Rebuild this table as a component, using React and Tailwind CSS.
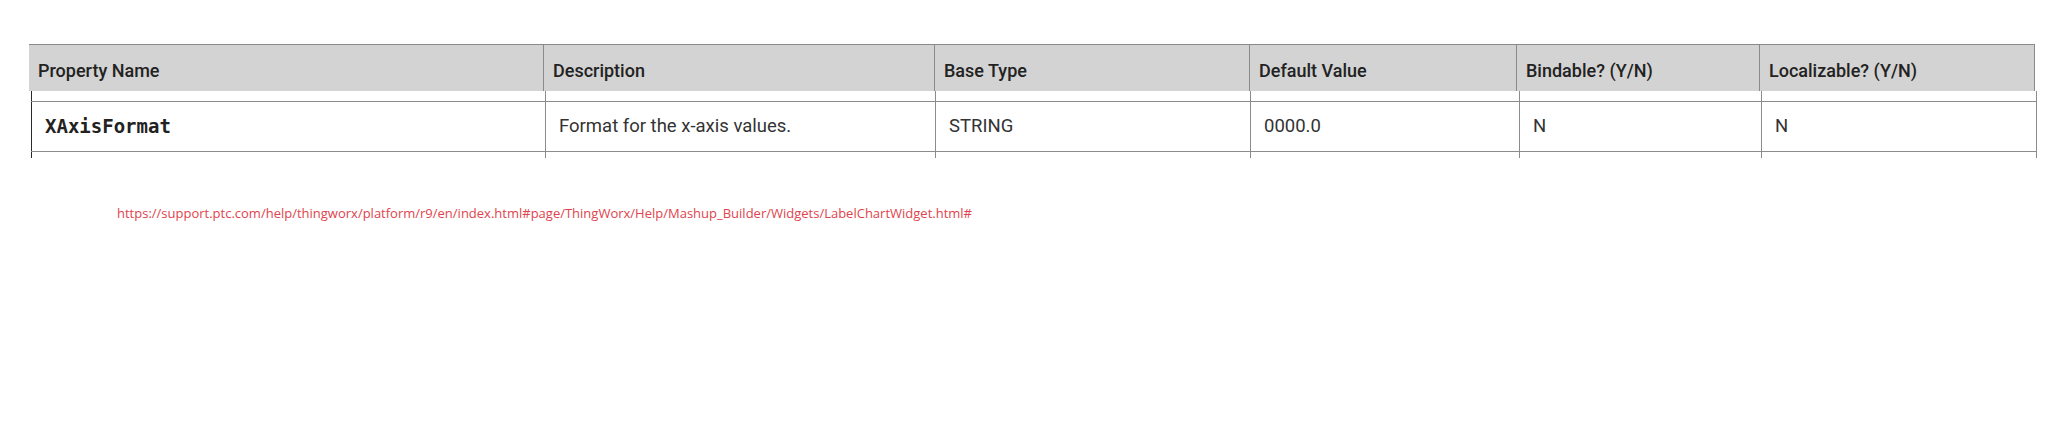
import React from "react";

const headers = [
  ["Property Name", "w-[515px]"],
  ["Description", "w-[391px]"],
  ["Base Type", "w-[315px]"],
  ["Default Value", "w-[267px]"],
  ["Bindable? (Y/N)", "w-[243px]"],
  ["Localizable? (Y/N)", "w-[275px]"],
];

const bodyW = ["w-[514px]", "w-[390px]", "w-[315px]", "w-[269px]", "w-[242px]", "w-[276px]"];

function BodyRow({ cells, h, main }) {
  return (
    <div className={`flex ${h} ${main ? "border-y border-[#8c8c8c]" : ""}`}>
      {bodyW.map((w, i) => (
        <div
          key={i}
          className={`${w} h-full flex items-center border-l ${i === 0 ? "border-[#2a2a2a]" : "border-[#8c8c8c]"} ${i === 5 ? "border-r border-r-[#8c8c8c]" : ""} pl-[13px]`}
        >
          {cells ? cells[i] : null}
        </div>
      ))}
    </div>
  );
}

export default function App() {
  const roboto = { fontFamily: "Roboto, 'Liberation Sans', sans-serif" };
  return (
    <div className="w-[2048px] h-[426px] bg-white overflow-hidden">
      <div className="pt-[44px]">
        <div
          className="ml-[29px] w-[2006px] h-[47px] flex border-t border-[#8a8a8a] bg-[#d3d3d3] text-[18px] font-medium text-[#222]"
          style={roboto}
        >
          {headers.map(([t, w], i) => (
            <div key={i} className={`${w} h-full flex items-center pt-[4px] pl-[9px] border-r border-[#8a8a8a]`}>
              {t}
            </div>
          ))}
        </div>
        <div className="ml-[31px] w-[2006px] text-[18.5px] text-[#333]" style={roboto}>
          <BodyRow h="h-[10px]" />
          <BodyRow
            h="h-[51px]"
            main
            cells={[
              <span key="a" className="font-bold text-[19px] text-[#222]" style={{ fontFamily: "'DejaVu Sans Mono', 'Liberation Mono', monospace" }}>XAxisFormat</span>,
              "Format for the x-axis values.",
              "STRING",
              "0000.0",
              "N",
              "N",
            ]}
          />
          <BodyRow h="h-[6px]" />
        </div>
        <div
          className="ml-[117px] mt-[46px] text-[13px] text-[#e0434d] whitespace-nowrap"
          style={{ fontFamily: "'Open Sans', 'Liberation Sans', sans-serif" }}
        >
          https://support.ptc.com/help/thingworx/platform/r9/en/index.html#page/ThingWorx/Help/Mashup_Builder/Widgets/LabelChartWidget.html#
        </div>
      </div>
    </div>
  );
}
